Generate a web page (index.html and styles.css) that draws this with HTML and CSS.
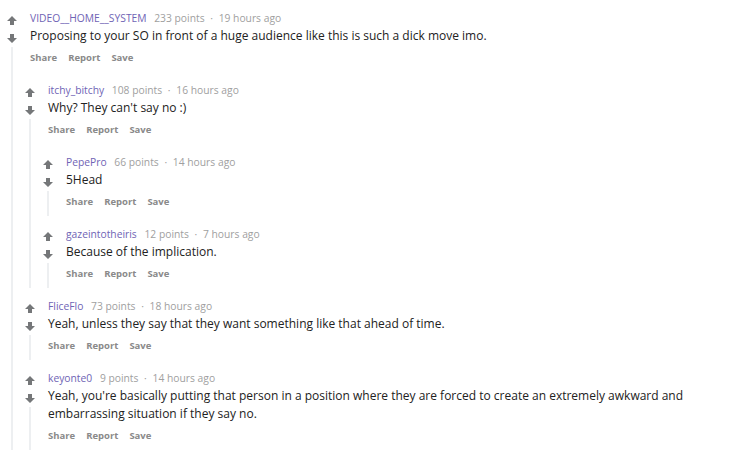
FILE: index.html
```html
<!DOCTYPE html>
<html>
<head>
<meta charset="utf-8">
<link rel="stylesheet" href="styles.css">
</head>
<body>
<div class="thread">
  <div class="comment">
    <div class="votes">
      <svg class="arrow" viewBox="0 0 10 9"><path d="M5 0 L10 5 H7 V9 H3 V5 H0 Z"/></svg>
      <svg class="arrow down" viewBox="0 0 10 9"><path d="M5 9 L10 4 H7 V0 H3 V4 H0 Z"/></svg>
      <div class="line"></div>
    </div>
    <div class="main">
      <div class="meta"><span class="user">VIDEO__HOME__SYSTEM</span> 233 points <span class="dot">·</span> 19 hours ago</div>
      <div class="body">Proposing to your SO in front of a huge audience like this is such a dick move imo.</div>
      <div class="actions"><span>Share</span><span>Report</span><span>Save</span></div>
      <div class="children">

        <div class="comment">
          <div class="votes">
            <svg class="arrow" viewBox="0 0 10 9"><path d="M5 0 L10 5 H7 V9 H3 V5 H0 Z"/></svg>
            <svg class="arrow down" viewBox="0 0 10 9"><path d="M5 9 L10 4 H7 V0 H3 V4 H0 Z"/></svg>
            <div class="line"></div>
          </div>
          <div class="main">
            <div class="meta"><span class="user">itchy_bitchy</span> 108 points <span class="dot">·</span> 16 hours ago</div>
            <div class="body">Why? They can't say no :)</div>
            <div class="actions"><span>Share</span><span>Report</span><span>Save</span></div>
            <div class="children">
              <div class="comment">
                <div class="votes">
                  <svg class="arrow" viewBox="0 0 10 9"><path d="M5 0 L10 5 H7 V9 H3 V5 H0 Z"/></svg>
                  <svg class="arrow down" viewBox="0 0 10 9"><path d="M5 9 L10 4 H7 V0 H3 V4 H0 Z"/></svg>
                  <div class="line"></div>
                </div>
                <div class="main">
                  <div class="meta"><span class="user">PepePro</span> 66 points <span class="dot">·</span> 14 hours ago</div>
                  <div class="body">5Head</div>
                  <div class="actions"><span>Share</span><span>Report</span><span>Save</span></div>
                </div>
              </div>
              <div class="comment">
                <div class="votes">
                  <svg class="arrow" viewBox="0 0 10 9"><path d="M5 0 L10 5 H7 V9 H3 V5 H0 Z"/></svg>
                  <svg class="arrow down" viewBox="0 0 10 9"><path d="M5 9 L10 4 H7 V0 H3 V4 H0 Z"/></svg>
                  <div class="line"></div>
                </div>
                <div class="main">
                  <div class="meta"><span class="user">gazeintotheiris</span> 12 points <span class="dot">·</span> 7 hours ago</div>
                  <div class="body">Because of the implication.</div>
                  <div class="actions"><span>Share</span><span>Report</span><span>Save</span></div>
                </div>
              </div>
            </div>
          </div>
        </div>

        <div class="comment">
          <div class="votes">
            <svg class="arrow" viewBox="0 0 10 9"><path d="M5 0 L10 5 H7 V9 H3 V5 H0 Z"/></svg>
            <svg class="arrow down" viewBox="0 0 10 9"><path d="M5 9 L10 4 H7 V0 H3 V4 H0 Z"/></svg>
            <div class="line"></div>
          </div>
          <div class="main">
            <div class="meta"><span class="user">FliceFlo</span> 73 points <span class="dot">·</span> 18 hours ago</div>
            <div class="body">Yeah, unless they say that they want something like that ahead of time.</div>
            <div class="actions"><span>Share</span><span>Report</span><span>Save</span></div>
          </div>
        </div>

        <div class="comment">
          <div class="votes">
            <svg class="arrow" viewBox="0 0 10 9"><path d="M5 0 L10 5 H7 V9 H3 V5 H0 Z"/></svg>
            <svg class="arrow down" viewBox="0 0 10 9"><path d="M5 9 L10 4 H7 V0 H3 V4 H0 Z"/></svg>
            <div class="line"></div>
          </div>
          <div class="main">
            <div class="meta"><span class="user">keyonte0</span> 9 points <span class="dot">·</span> 14 hours ago</div>
            <div class="body">Yeah, you're basically putting that person in a position where they are forced to create an extremely awkward and embarrassing situation if they say no.</div>
            <div class="actions"><span>Share</span><span>Report</span><span>Save</span></div>
          </div>
        </div>

      </div>
    </div>
  </div>
</div>
</body>
</html>
```
FILE: styles.css
```css
html, body {
  margin: 0;
  padding: 0;
  background: #ffffff;
  width: 740px;
  height: 458px;
  overflow: hidden;
}
body {
  font-family: "Open Sans", "Noto Sans", sans-serif;
  color: #222222;
}
.thread {
  padding: 9px 40px 0 3px;
}
.comment {
  display: flex;
  align-items: stretch;
}
.children .comment {
  margin-left: -9px;
}
.children {
  padding-top: 14px;
}
.children > .comment + .comment {
  margin-top: 9px;
}
.votes {
  width: 18px;
  flex: 0 0 18px;
  display: flex;
  flex-direction: column;
  align-items: center;
  padding-top: 7px;
}
.arrow {
  width: 10px;
  height: 9px;
  fill: #757779;
  display: block;
}
.arrow.down {
  margin-top: 9px;
}
.line {
  flex: 1;
  width: 2px;
  background: #edeff1;
  margin-top: 4px;
}
.main {
  margin-left: 9px;
  flex: 1;
  min-width: 0;
  padding-bottom: 5px;
}
.main:has(> .children) {
  padding-bottom: 0;
}
.meta {
  font-size: 10.3px;
  line-height: 18px;
  color: #a0a0a0;
  white-space: nowrap;
}
.user {
  color: #6f64b5;
  margin-right: 5px;
}
.dot {
  margin: 0 3px;
}
.body {
  font-size: 12px;
  line-height: 18px;
  color: #222222;
}
.actions {
  margin-top: 4px;
  font-size: 9.5px;
  font-weight: 700;
  line-height: 18px;
  color: #8a8a8a;
  display: flex;
  gap: 11px;
}
```
